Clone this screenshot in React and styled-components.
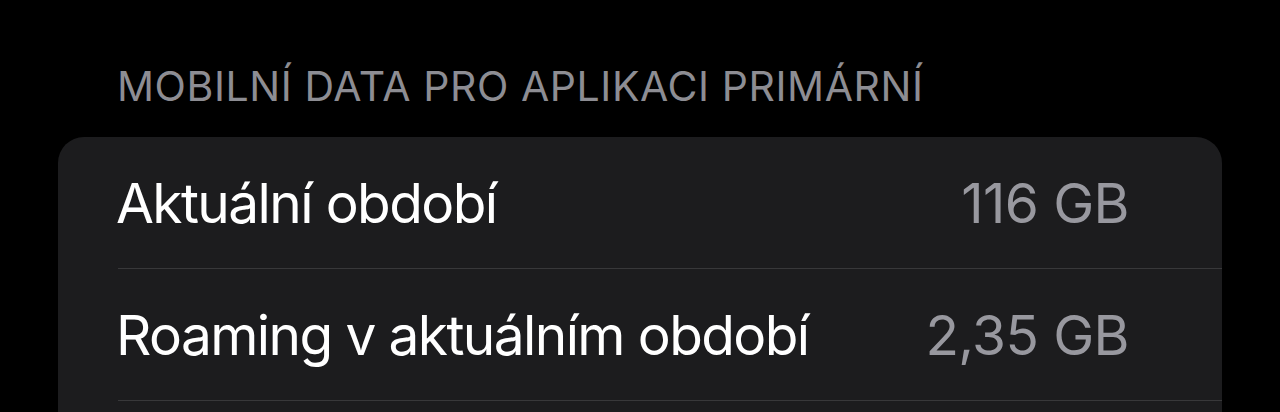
import React from "react";
import styled, { createGlobalStyle } from "styled-components";

const GlobalStyle = createGlobalStyle`
  html, body {
    margin: 0;
    padding: 0;
    background: #000;
  }
  body {
    font-family: Inter, "Noto Sans", "Liberation Sans", sans-serif;
    -webkit-font-smoothing: antialiased;
  }
`;

const Screen = styled.div`
  width: 1280px;
  height: 412px;
  overflow: hidden;
  background: #000;
  padding: 0 58px;
  box-sizing: border-box;
`;

const SectionHeader = styled.div`
  padding: 58px 0 0 59px;
  height: 137px;
  box-sizing: border-box;
  font-size: 41px;
  font-weight: 370;
  line-height: 56px;
  letter-spacing: 0.58px;
  color: #8d8d93;
  white-space: nowrap;
`;

const Card = styled.div`
  background: #1c1c1e;
  border-radius: 26px;
  overflow: hidden;
  padding-bottom: 60px;
`;

const Row = styled.div`
  padding-left: 60px;
`;

const RowInner = styled.div`
  height: 131px;
  display: flex;
  align-items: center;
  justify-content: space-between;
  padding-right: 93px;
  border-bottom: 1.5px solid #38383a;
  font-size: 55px;
  font-weight: 370;
`;

const Label = styled.span`
  color: #fff;
  margin-left: -2px;
  letter-spacing: -1.6px;
`;

const Value = styled.span`
  color: #98989f;
  letter-spacing: -0.6px;
`;

const rows = [
  { label: "Aktuální období", value: "116 GB" },
  { label: "Roaming v aktuálním období", value: "2,35 GB" },
];

export default function App() {
  return (
    <Screen>
      <GlobalStyle />
      <SectionHeader>MOBILNÍ DATA PRO APLIKACI PRIMÁRNÍ</SectionHeader>
      <Card>
        {rows.map((r) => (
          <Row key={r.label}>
            <RowInner>
              <Label>{r.label}</Label>
              <Value>{r.value}</Value>
            </RowInner>
          </Row>
        ))}
      </Card>
    </Screen>
  );
}
